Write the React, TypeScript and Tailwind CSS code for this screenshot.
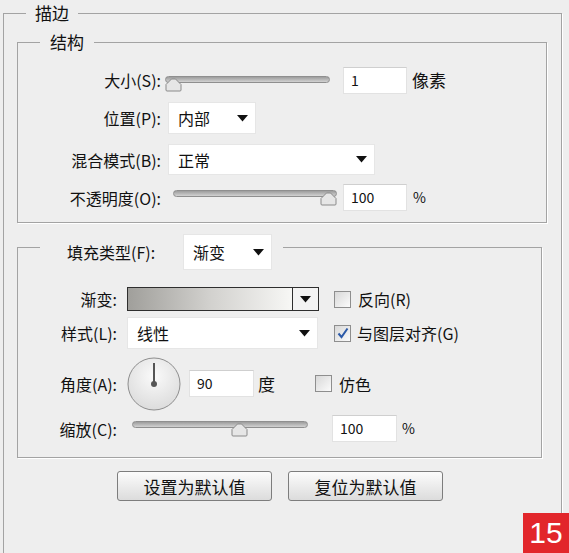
import React from 'react';

const FONT = { fontFamily: '"Noto Sans CJK SC", "Noto Sans", sans-serif' };

function Arrow() {
  return (
    <svg width="11" height="7" viewBox="0 0 11 7">
      <path d="M0 0 H11 L5.5 6.5 Z" fill="#111" />
    </svg>
  );
}

function Thumb() {
  return (
    <svg width="17" height="14" viewBox="0 0 17 14">
      <path d="M1 6.5 L6.5 1 H10.5 L16 6.5 V12 Q16 13 15 13 H2 Q1 13 1 12 Z" fill="#e6e6e6" stroke="#8a8a8a" strokeWidth="1" />
    </svg>
  );
}

// slider: track with a small house-shaped thumb sitting on it
function Slider({ width, thumbAt, h }: { width: number; thumbAt: number; h: string }) {
  return (
    <div className={`relative ${h}`} style={{ width }}>
      <div className="h-[7px] rounded-full border border-[#8f8f8f] bg-gradient-to-b from-[#9d9d9d] to-[#d2d2d2]" />
      <div className="absolute top-[2px]" style={{ left: thumbAt }}>
        <Thumb />
      </div>
    </div>
  );
}

function Input({ value, w }: { value: string; w: string }) {
  return (
    <div className={`${w} h-[27px] bg-white border border-[#e2e2e2] border-t-[#cfcfcf] pl-[7px] flex items-center text-[14px] text-[#111]`}>
      {value}
    </div>
  );
}

function Select({ value, w, h = 'h-[31px]' }: { value: string; w: string; h?: string }) {
  return (
    <div className={`${w} ${h} bg-white border border-[#e6e6e6] flex items-center justify-between pl-[9px] pr-[7px] text-[16px]`}>
      <span>{value}</span>
      <Arrow />
    </div>
  );
}

function Check({ checked }: { checked?: boolean }) {
  return (
    <div className="w-[17px] h-[17px] border border-[#8e8e8e] bg-gradient-to-br from-[#d8d8d8] to-[#fbfbfb] flex items-center justify-center">
      {checked && (
        <svg width="12" height="12" viewBox="0 0 12 12">
          <path d="M1.5 6.5 L4.5 10 L10.5 1.5" fill="none" stroke="#2c5aa8" strokeWidth="2" />
        </svg>
      )}
    </div>
  );
}

export default function App() {
  return (
    <div className="relative w-[569px] h-[553px] overflow-hidden bg-[#eeeeee] text-[#111]" style={FONT}>
      {/* 描边 */}
      <fieldset className="ml-[3px] mt-[3px] w-[559px] h-[620px] border border-[#a3a3a3] shadow-[1px_1px_0_#ffffff]">
        <legend className="ml-[22px] px-[9px] h-[20px] leading-[20px] text-[17px]">描边</legend>
        <div className="pl-[13px] pt-[9px]">
          {/* 结构 */}
          <fieldset className="w-[530px] border border-[#a3a3a3] shadow-[1px_1px_0_#ffffff] pb-[11px]">
            <legend className="ml-[22px] px-[10px] h-[20px] leading-[20px] text-[17px]">结构</legend>
            <div className="text-[16px]">
              <div className="flex items-center h-[28px] mt-[14px]">
                <div className="w-[143px] text-right">大小(S):</div>
                <div className="ml-[4px] pt-[10px]">
                  <Slider width={165} thumbAt={0} h="h-[18px]" />
                </div>
                <div className="ml-[13px]"><Input value="1" w="w-[64px]" /></div>
                <div className="ml-[5px] text-[17px]">像素</div>
              </div>
              <div className="flex items-center h-[32px] mt-[8px]">
                <div className="w-[143px] text-right">位置(P):</div>
                <div className="ml-[7px]"><Select value="内部" w="w-[88px]" h="h-[32px]" /></div>
              </div>
              <div className="flex items-center h-[31px] mt-[10px]">
                <div className="w-[143px] text-right">混合模式(B):</div>
                <div className="ml-[7px]"><Select value="正常" w="w-[207px]" /></div>
              </div>
              <div className="flex items-center h-[27px] mt-[9px]">
                <div className="w-[143px] text-right">不透明度(O):</div>
                <div className="ml-[12px] pt-[6px]">
                  <Slider width={164} thumbAt={147} h="h-[21px]" />
                </div>
                <div className="ml-[6px]"><Input value="100" w="w-[64px]" /></div>
                <div className="ml-[6px] text-[14px]">%</div>
              </div>
            </div>
          </fieldset>

          {/* 填充类型 */}
          <fieldset className="mt-[10px] w-[525px] border border-[#a3a3a3] shadow-[1px_1px_0_#ffffff] pb-[15px]">
            <legend className="ml-[22px] pl-[27px] pr-[11px] h-[28px]">
              <div className="flex items-start text-[16px] pt-[1px]">
                <div className="w-[116px] leading-[36px]">填充类型(F):</div>
                <Select value="渐变" w="w-[89px]" h="h-[36px]" />
              </div>
            </legend>
            <div className="text-[16px]">
              <div className="flex items-center h-[24px] mt-[26px]">
                <div className="w-[99px] text-right">渐变:</div>
                <div className="ml-[10px] w-[192px] h-[24px] border border-[#2e2e2e] flex">
                  <div className="flex-1 bg-gradient-to-r from-[#a09f9b] via-[#d2d1ce] to-[#f7f7f5]" />
                  <div className="w-[26px] border-l border-[#2e2e2e] bg-[#f3f3f3] flex items-center justify-center">
                    <Arrow />
                  </div>
                </div>
                <div className="ml-[15px]"><Check /></div>
                <div className="ml-[7px]">反向(R)</div>
              </div>
              <div className="flex items-center h-[32px] mt-[6px]">
                <div className="w-[99px] text-right">样式(L):</div>
                <div className="ml-[10px]"><Select value="线性" w="w-[191px]" h="h-[32px]" /></div>
                <div className="ml-[16px]"><Check checked /></div>
                <div className="ml-[6px]">与图层对齐(G)</div>
              </div>
              <div className="flex items-center h-[53px] mt-[8px]">
                <div className="w-[99px] text-right">角度(A):</div>
                <div className="ml-[10px]">
                  <svg width="54" height="54" viewBox="0 0 54 54">
                    <defs>
                      <radialGradient id="dial" cx="50%" cy="35%" r="65%">
                        <stop offset="0%" stopColor="#fafafa" />
                        <stop offset="100%" stopColor="#dcdcdc" />
                      </radialGradient>
                    </defs>
                    <circle cx="27" cy="27" r="26" fill="url(#dial)" stroke="#8e8e8e" strokeWidth="1" />
                    <line x1="27" y1="27" x2="27" y2="6" stroke="#555" strokeWidth="2" />
                    <circle cx="27" cy="27" r="3" fill="#555" />
                  </svg>
                </div>
                <div className="ml-[8px]"><Input value="90" w="w-[65px]" /></div>
                <div className="ml-[4px] text-[17px]">度</div>
                <div className="ml-[40px]"><Check /></div>
                <div className="ml-[7px]">仿色</div>
              </div>
              <div className="flex items-center h-[27px] mt-[5px]">
                <div className="w-[99px] text-right">缩放(C):</div>
                <div className="ml-[15px] pt-[6px]">
                  <Slider width={176} thumbAt={99} h="h-[21px]" />
                </div>
                <div className="ml-[24px]"><Input value="100" w="w-[65px]" /></div>
                <div className="ml-[5px] text-[14px]">%</div>
              </div>
            </div>
          </fieldset>

          <div className="flex gap-[16px] mt-[13px] pl-[100px]">
            <button className="w-[155px] h-[30px] rounded-[3px] border border-[#7d7d7d] bg-gradient-to-b from-[#fcfcfc] to-[#dcdcdc] text-[17px] leading-none">
              设置为默认值
            </button>
            <button className="w-[155px] h-[30px] rounded-[3px] border border-[#7d7d7d] bg-gradient-to-b from-[#fcfcfc] to-[#dcdcdc] text-[17px] leading-none">
              复位为默认值
            </button>
          </div>
        </div>
      </fieldset>

      <div
        className="absolute right-0 bottom-0 w-[46px] h-[40px] bg-[#e2262b] text-white text-[30px] leading-[40px] text-center"
        style={{ fontFamily: '"Liberation Sans Narrow", "Liberation Sans", sans-serif' }}
      >
        15
      </div>
    </div>
  );
}
